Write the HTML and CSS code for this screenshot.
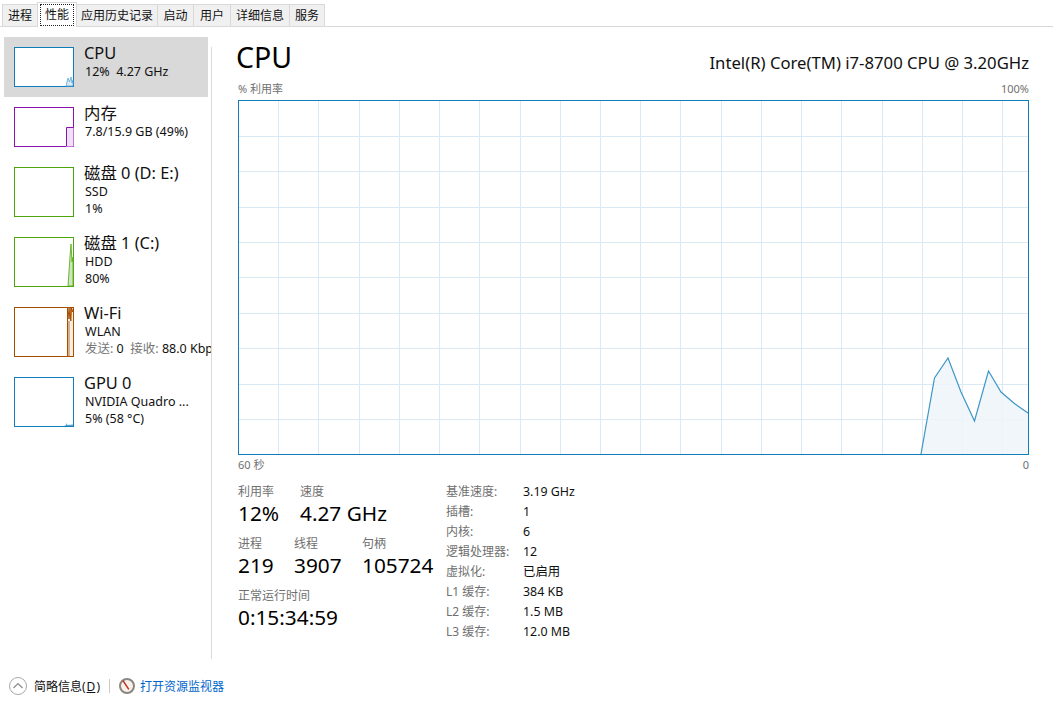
FILE: index.html
```html
<!DOCTYPE html>
<html lang="zh">
<head>
<meta charset="utf-8">
<title>任务管理器</title>
<link rel="stylesheet" href="styles.css">
</head>
<body>
<nav class="tabs">
  <span class="tab tw-36">进程</span>
  <span class="tab tw-40 active"><span class="focus">性能</span></span>
  <span class="tab tw-82">应用历史记录</span>
  <span class="tab tw-37">启动</span>
  <span class="tab tw-38">用户</span>
  <span class="tab tw-60">详细信息</span>
  <span class="tab tw-36">服务</span>
</nav>
<div class="main">
  <aside class="side">
    <div class="item short selected">
      <svg class="thumb t-short" viewBox="0 0 60 40"><rect x=".5" y=".5" width="59" height="39" fill="#fff" stroke="#117dbb"/><path d="M52 39L54 31L55.500 35L57 30L58 36L59 33V39Z" fill="#dcebf5" stroke="#5aa5d2" stroke-width=".8"/></svg>
      <div class="info"><div class="name">CPU</div><div class="sub">12%&nbsp; 4.27 GHz</div></div>
    </div>
    <div class="item short">
      <svg class="thumb t-short" viewBox="0 0 60 40"><rect x=".5" y=".5" width="59" height="39" fill="#fff" stroke="#8b12ae"/><path d="M52 39.500V20.500H59.500V39.500Z" fill="#f0e0f5"/><path d="M52.500 39V20.500H59.500" fill="none" stroke="#8b12ae"/></svg>
      <div class="info"><div class="name">内存</div><div class="sub">7.8/15.9 GB (49%)</div></div>
    </div>
    <div class="item">
      <svg class="thumb" viewBox="0 0 60 50"><rect x=".5" y=".5" width="59" height="49" fill="#fff" stroke="#4da60c"/></svg>
      <div class="info"><div class="name">磁盘 0 (D: E:)</div><div class="sub">SSD</div><div class="sub">1%</div></div>
    </div>
    <div class="item">
      <svg class="thumb" viewBox="0 0 60 50"><rect x=".5" y=".5" width="59" height="49" fill="#fff" stroke="#4da60c"/><path d="M54 49L56 20L57 7L58 25L59 20V49Z" fill="#cfe5bc" stroke="#5fae24" stroke-width=".9"/></svg>
      <div class="info"><div class="name">磁盘 1 (C:)</div><div class="sub">HDD</div><div class="sub">80%</div></div>
    </div>
    <div class="item">
      <svg class="thumb" viewBox="0 0 60 50"><rect x=".5" y=".5" width="59" height="49" fill="#fff" stroke="#a74f01"/><path d="M53.500 49V1H59V49" fill="#f6ede3"/><path d="M53.500 49V1M54 1L55 12L56 1L56.800 14L57.500 1L58.500 5L59.500 1" fill="none" stroke="#a74f01"/><path d="M55 49V14" stroke="#cf9a6b" stroke-width="1.500"/></svg>
      <div class="info"><div class="name">Wi-Fi</div><div class="sub">WLAN</div><div class="sub nowrap"><span class="muted">发送:</span> 0&nbsp; <span class="muted">接收:</span> 88.0 Kbps</div></div>
    </div>
    <div class="item">
      <svg class="thumb" viewBox="0 0 60 50"><rect x=".5" y=".5" width="59" height="49" fill="#fff" stroke="#117dbb"/><path d="M50 49L52 48L52.500 46L53.500 48L59 47.500V49Z" fill="#5aa5d2"/></svg>
      <div class="info"><div class="name">GPU 0</div><div class="sub">NVIDIA Quadro ...</div><div class="sub">5% (58 °C)</div></div>
    </div>
  </aside>
  <section class="detail">
    <header class="head">
      <h1 class="title">CPU</h1>
      <div class="model">Intel(R) Core(TM) i7-8700 CPU @ 3.20GHz</div>
    </header>
    <div class="axis top"><span>% 利用率</span><span>100%</span></div>
    <svg class="chart" viewBox="0 0 791 355">
      <path fill="none" stroke="#d9eaf4" d="M40.500 0V355M80.500 0V355M121.500 0V355M161.500 0V355M201.500 0V355M241.500 0V355M282.500 0V355M322.500 0V355M362.500 0V355M402.500 0V355M442.500 0V355M483.500 0V355M523.500 0V355M563.500 0V355M603.500 0V355M644.500 0V355M684.500 0V355M724.500 0V355M764.500 0V355M0 36.500H791M0 71.500H791M0 107.500H791M0 142.500H791M0 177.500H791M0 213.500H791M0 248.500H791M0 284.500H791M0 319.500H791"/>
      <path d="M683 354L696.500 278L710 258L723 292L736.500 321L750.500 271L763 292L777 304L790 313V354Z" fill="#eff5f9" fill-opacity=".85"/>
      <path d="M683 354L696.500 278L710 258L723 292L736.500 321L750.500 271L763 292L777 304L790 313" fill="none" stroke="#3e95c8" stroke-width="1.200"/>
      <rect x=".5" y=".5" width="790" height="354" fill="none" stroke="#117dbb"/>
    </svg>
    <div class="axis bottom"><span>60 秒</span><span>0</span></div>
    <div class="stats">
      <div class="live">
        <div class="row">
          <div class="stat w-62"><div class="label">利用率</div><div class="value">12%</div></div>
          <div class="stat"><div class="label">速度</div><div class="value">4.27 GHz</div></div>
        </div>
        <div class="row">
          <div class="stat w-56"><div class="label">进程</div><div class="value">219</div></div>
          <div class="stat w-68"><div class="label">线程</div><div class="value">3907</div></div>
          <div class="stat"><div class="label">句柄</div><div class="value">105724</div></div>
        </div>
        <div class="row">
          <div class="stat"><div class="label">正常运行时间</div><div class="value">0:15:34:59</div></div>
        </div>
      </div>
      <dl class="spec">
        <dt>基准速度:</dt><dd>3.19 GHz</dd>
        <dt>插槽:</dt><dd>1</dd>
        <dt>内核:</dt><dd>6</dd>
        <dt>逻辑处理器:</dt><dd>12</dd>
        <dt>虚拟化:</dt><dd>已启用</dd>
        <dt>L1 缓存:</dt><dd>384 KB</dd>
        <dt>L2 缓存:</dt><dd>1.5 MB</dd>
        <dt>L3 缓存:</dt><dd>12.0 MB</dd>
      </dl>
    </div>
  </section>
</div>
<footer class="foot">
  <svg class="chev" viewBox="0 0 20 20"><circle cx="10" cy="10" r="8.500" fill="#fff" stroke="#a8a8a8"/><path d="M5.500 12L10 7.500L14.500 12" fill="none" stroke="#8a8a8a" stroke-width="1.200"/></svg>
  <span class="less">简略信息(<u class="key">D</u>)</span>
  <span class="sep"></span>
  <svg class="mon" viewBox="0 0 18 18"><circle cx="9" cy="9" r="7" fill="#f6f2ea" stroke="#8a8680" stroke-width="2"/><path d="M5 3.700L10.800 12.300" stroke="#c8281e" stroke-width="1.500"/></svg>
  <a class="link">打开资源监视器</a>
</footer>
</body>
</html>
```
FILE: styles.css
```css
* { box-sizing: border-box; }
html, body { margin: 0; height: 100%; }
body {
  width: 1053px;
  height: 711px;
  overflow: hidden;
  background: #fff;
  color: #111;
  font-family: "Noto Sans", "Noto Sans CJK SC", sans-serif;
  font-size: 12px;
  display: flex;
  flex-direction: column;
}
.tabs {
  height: 27px;
  padding: 2px 0 0 2px;
  display: flex;
  align-items: flex-end;
  border-bottom: 1px solid #d9d9d9;
  flex: none;
}
.tab {
  height: 22px;
  margin-right: -1px;
  display: flex;
  align-items: center;
  justify-content: center;
  background: #f0f0f0;
  border: 1px solid #d9d9d9;
  border-bottom: 0;
  line-height: 20px;
  white-space: nowrap;
}
.tw-36 { width: 36px; }
.tw-37 { width: 37px; }
.tw-38 { width: 38px; }
.tw-40 { width: 40px; }
.tw-60 { width: 60px; }
.tw-82 { width: 82px; }
.tab.active {
  height: 25px;
  margin-bottom: -1px;
  background: #fff;
  position: relative;
}
.focus { border: 1px dotted #222; padding: 1px 4px; line-height: 18px; }
.main { flex: 1; display: flex; min-height: 0; }
.side {
  width: 212px;
  height: 622px;
  margin-top: 10px;
  padding: 0 0 0 4px;
  flex: none;
  position: relative;
  overflow: hidden;
}
.side::after {
  content: "";
  position: absolute;
  right: 0;
  top: 10px;
  bottom: 0;
  width: 1px;
  background: #d9d9d9;
}
.item {
  width: 204px;
  height: 70px;
  padding: 10px 0 0 10px;
  display: flex;
}
.item.short { height: 60px; }
.selected { background: #d9d9d9; }
.thumb { width: 60px; height: 50px; flex: none; display: block; }
.t-short { height: 40px; }
.info { margin-left: 10px; margin-top: -5px; }
.name { font-size: 16.400px; line-height: 18px; padding-top: 2px; white-space: nowrap; }
.sub { font-size: 12.500px; line-height: 17px; white-space: nowrap; margin-left: 1px; }
.name + .sub { margin-top: 1px; }
.muted { color: #767676; }
.detail { flex: 1; padding: 10px 25px 0 26px; min-width: 0; }
.head { display: flex; justify-content: space-between; align-items: flex-start; height: 43px; }
.title { margin: 0 0 0 -2px; font-size: 28.500px; font-weight: 400; line-height: 40px; color: #000; }
.model { font-size: 16.700px; line-height: 20px; margin-top: 16px; color: #111; white-space: nowrap; margin-right: -1px; }
.axis { display: flex; justify-content: space-between; color: #707070; font-size: 11px; line-height: 16px; width: 791px; }
.top { height: 20px; padding-top: 1px; }
.bottom { height: 20px; padding-top: 2px; }
.chart { width: 791px; height: 355px; display: block; }
.stats { display: flex; margin-top: 8px; }
.live { width: 208px; padding-top: 1px; }
.row { display: flex; height: 52px; }
.stat { flex: none; white-space: nowrap; }
.w-62 { width: 62px; }
.w-56 { width: 56px; }
.w-68 { width: 68px; }
.label { color: #707070; font-size: 12px; line-height: 16px; }
.value { font-size: 20.800px; line-height: 26px; color: #000; }
.spec {
  margin: -2px 0 0;
  display: grid;
  grid-template-columns: 77px auto;
  grid-auto-rows: 20px;
  align-items: center;
  justify-content: start;
}
.spec dt { color: #707070; white-space: nowrap; }
.spec dd { margin: 0; color: #111; font-size: 12.400px; }
.foot {
  height: 48px;
  flex: none;
  padding: 0 0 2px 8px;
  display: flex;
  align-items: center;
  background: #fff;
}
.chev { width: 20px; height: 20px; flex: none; }
.less { margin-left: 6px; color: #111; white-space: nowrap; }
.key { margin: 0 1px; }
.sep { width: 1px; height: 14px; background: #c9c9c9; margin: 0 8px 0 9px; }
.mon { width: 18px; height: 18px; flex: none; }
.link { margin-left: 4px; color: #0066cc; white-space: nowrap; }
```
